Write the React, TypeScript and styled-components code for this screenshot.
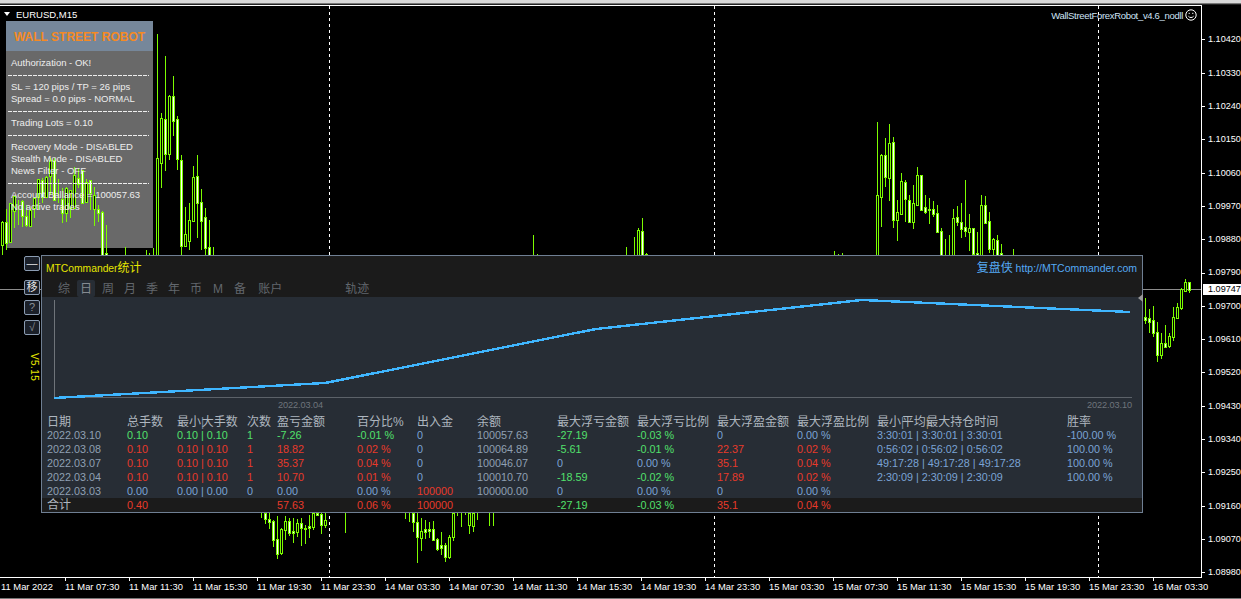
import styled, { createGlobalStyle } from 'styled-components';

type Tone = 'plain' | 'green' | 'red' | 'blue';
type Candle = [number, number, number, number?, number?, number?];
type TableCell = [string, Tone?];

const FONT = '"Liberation Sans", "Noto Sans CJK SC", sans-serif';
const COLUMNS = '80px 50px 70px 30px 80px 60px 60px 80px 80px 80px 80px 80px 190px 1fr';
const CANDLE_GREEN = '#7cfc00';

const toneColors: Record<Tone, string> = {
    plain: '#90a0b3',
    green: '#52e06c',
    red: '#e83a2a',
    blue: '#7ba4d6',
};

// x, wick top, wick bottom, body top, body bottom, 1 = white body
const candles: Candle[] = [
    [2, 221, 255, 222, 245], [6, 209, 250, 222, 243, 1], [10, 203, 243, 203, 242], [14, 196, 228, 196, 211],
    [18, 200, 225], [22, 200, 227, 201, 216, 1], [26, 205, 227, 216, 225, 1], [30, 208, 227, 210, 226],
    [34, 197, 218, 198, 208], [38, 179, 210, 179, 197], [42, 178, 203, 180, 197, 1], [46, 176, 197, 177, 197],
    [50, 158, 195, 160, 176], [54, 158, 200, 160, 200, 1], [58, 179, 203], [62, 188, 223, 199, 213, 1],
    [66, 187, 222, 188, 213], [70, 190, 218, 190, 208], [74, 167, 208, 175, 208], [78, 168, 188, 178, 184, 1],
    [82, 170, 203, 170, 203, 1], [86, 179, 203, 182, 202], [90, 180, 210, 180, 193, 1], [94, 187, 226, 195, 209],
    [98, 205, 222, 209, 213, 1], [102, 211, 255, 212, 255, 1], [106, 225, 255, 253, 255, 1], [125, 247, 255],
    [146, 250, 255], [149, 253, 255], [153, 248, 255],
    [157, 34, 255, 158, 255], [161, 113, 188, 118, 163], [165, 56, 171, 119, 154, 1], [169, 95, 160, 96, 154],
    [173, 76, 136, 96, 121, 1], [177, 116, 170, 119, 159, 1], [181, 155, 255, 160, 246, 1], [185, 207, 246, 234, 246],
    [189, 203, 250, 220, 241], [193, 166, 221, 177, 221], [197, 155, 238, 176, 203, 1], [201, 189, 250, 202, 221, 1],
    [205, 208, 255, 217, 248, 1], [209, 220, 255, 247, 255, 1], [213, 247, 255],
    [261, 513, 518], [265, 513, 524, 513, 519, 1], [269, 513, 529, 519, 522, 1], [273, 520, 547, 521, 540, 1],
    [277, 516, 559, 539, 554, 1], [281, 528, 555, 529, 553], [285, 516, 540, 521, 530], [289, 518, 536, 521, 533, 1],
    [293, 518, 543, 531, 533, 1], [297, 519, 537, 523, 532], [301, 518, 546, 523, 528, 1], [305, 525, 544, 528, 529, 1],
    [309, 515, 538, 526, 528, 1], [313, 513, 530, 513, 527], [317, 513, 515, 513, 515, 1], [321, 513, 534, 514, 525, 1],
    [325, 513, 528, 520, 525], [345, 513, 533],
    [405, 513, 519], [409, 513, 522], [413, 513, 532, 513, 522, 1], [417, 513, 563, 522, 537, 1],
    [421, 518, 551, 531, 538], [425, 520, 539, 529, 532, 1], [429, 522, 538, 529, 531, 1], [433, 521, 541, 529, 540, 1],
    [437, 538, 551, 539, 549, 1], [441, 532, 555, 545, 548, 1], [445, 543, 562, 545, 557, 1], [449, 535, 559, 537, 557],
    [453, 513, 541, 513, 537], [457, 513, 516], [461, 513, 527], [465, 513, 515], [469, 513, 534, 513, 525],
    [473, 513, 532, 513, 526], [477, 513, 520], [489, 513, 526], [493, 513, 526],
    [533, 235, 255], [537, 254, 255], [626, 247, 255], [634, 237, 255], [638, 228, 255, 230, 255],
    [642, 218, 255, 231, 255, 1], [646, 253, 255, 254, 255], [834, 251, 255], [838, 254, 255], [842, 253, 255],
    [877, 122, 255, 195, 255], [881, 154, 227, 155, 197], [885, 138, 187, 155, 177, 1], [889, 124, 201, 143, 178],
    [893, 137, 228, 142, 220, 1], [897, 200, 241, 212, 220], [901, 173, 214, 181, 214], [905, 180, 222, 182, 199, 1],
    [909, 195, 222, 200, 222, 1], [913, 185, 229, 203, 222], [917, 167, 205, 175, 205], [921, 175, 210, 175, 210, 1],
    [925, 195, 214, 207, 212, 1], [929, 198, 224, 209, 210, 1], [933, 201, 217, 209, 214, 1], [937, 205, 233, 213, 232, 1],
    [941, 228, 255, 231, 255, 1], [945, 239, 255], [949, 235, 255], [953, 209, 255, 218, 255], [957, 206, 226, 217, 222, 1],
    [961, 203, 238, 222, 229, 1], [965, 180, 237, 227, 231, 1], [969, 214, 251, 228, 232], [973, 228, 254, 228, 254, 1],
    [977, 232, 255, 253, 255, 1], [981, 195, 255, 205, 255], [985, 196, 224, 205, 223, 1], [989, 212, 253, 221, 249, 1],
    [993, 238, 255, 239, 249], [997, 235, 255, 240, 255, 1], [1001, 244, 255, 253, 255, 1], [1013, 249, 255],
    [1145, 298, 324, 317, 320, 1], [1149, 309, 333, 318, 322, 1], [1153, 306, 337, 320, 333, 1],
    [1157, 322, 362, 332, 355, 1], [1161, 333, 359, 343, 355], [1165, 325, 347, 343, 347, 1], [1169, 333, 348, 336, 346],
    [1173, 307, 341, 317, 337], [1177, 303, 319, 307, 318], [1181, 288, 310, 289, 308], [1185, 279, 292, 282, 291],
    [1189, 282, 293, 282, 290, 1],
];

const prices = [
    '1.10420', '1.10330', '1.10240', '1.10150', '1.10060', '1.09970', '1.09880', '1.09790', '1.09700',
    '1.09610', '1.09520', '1.09430', '1.09340', '1.09250', '1.09160', '1.09070', '1.08980',
];

const times = [
    '11 Mar 07:30', '11 Mar 11:30', '11 Mar 15:30', '11 Mar 19:30', '11 Mar 23:30', '14 Mar 03:30',
    '14 Mar 07:30', '14 Mar 11:30', '14 Mar 15:30', '14 Mar 19:30', '14 Mar 23:30', '15 Mar 03:30',
    '15 Mar 07:30', '15 Mar 11:30', '15 Mar 15:30', '15 Mar 19:30', '15 Mar 23:30', '16 Mar 03:30',
];

const tabs = ['综', '日', '周', '月', '季', '年', '币', 'M', '备', '账户', '轨迹'];

const headers = [
    '日期', '总手数', '最小|大手数', '次数', '盈亏金额', '百分比%', '出入金', '余额',
    '最大浮亏金额', '最大浮亏比例', '最大浮盈金额', '最大浮盈比例', '最小|平均|最大持仓时间', '胜率',
];

const rows: TableCell[][] = [
    [['2022.03.10'], ['0.10', 'green'], ['0.10 | 0.10', 'green'], ['1', 'green'], ['-7.26', 'green'], ['-0.01 %', 'green'], ['0', 'blue'], ['100057.63'], ['-27.19', 'green'], ['-0.03 %', 'green'], ['0', 'blue'], ['0.00 %', 'blue'], ['3:30:01 | 3:30:01 | 3:30:01', 'blue'], ['-100.00 %', 'blue']],
    [['2022.03.08'], ['0.10', 'red'], ['0.10 | 0.10', 'red'], ['1', 'red'], ['18.82', 'red'], ['0.02 %', 'red'], ['0', 'blue'], ['100064.89'], ['-5.61', 'green'], ['-0.01 %', 'green'], ['22.37', 'red'], ['0.02 %', 'red'], ['0:56:02 | 0:56:02 | 0:56:02', 'blue'], ['100.00 %', 'blue']],
    [['2022.03.07'], ['0.10', 'red'], ['0.10 | 0.10', 'red'], ['1', 'red'], ['35.37', 'red'], ['0.04 %', 'red'], ['0', 'blue'], ['100046.07'], ['0', 'blue'], ['0.00 %', 'blue'], ['35.1', 'red'], ['0.04 %', 'red'], ['49:17:28 | 49:17:28 | 49:17:28', 'blue'], ['100.00 %', 'blue']],
    [['2022.03.04'], ['0.10', 'red'], ['0.10 | 0.10', 'red'], ['1', 'red'], ['10.70', 'red'], ['0.01 %', 'red'], ['0', 'blue'], ['100010.70'], ['-18.59', 'green'], ['-0.02 %', 'green'], ['17.89', 'red'], ['0.02 %', 'red'], ['2:30:09 | 2:30:09 | 2:30:09', 'blue'], ['100.00 %', 'blue']],
    [['2022.03.03'], ['0.00', 'blue'], ['0.00 | 0.00', 'blue'], ['0', 'blue'], ['0.00', 'blue'], ['0.00 %', 'blue'], ['100000', 'red'], ['100000.00'], ['0', 'blue'], ['0.00 %', 'blue'], ['0', 'blue'], ['0.00 %', 'blue'], [''], ['']],
];

const totals: TableCell[] = [
    ['0.40', 'red'], [''], [''], ['57.63', 'red'], ['0.06 %', 'red'], ['100000', 'red'], [''],
    ['-27.19', 'green'], ['-0.03 %', 'green'], ['35.1', 'red'], ['0.04 %', 'red'], [''], [''],
];

const CandleChart = () => (
    <ChartSvg viewBox="0 5 1202 573">
        <line x1="0" y1="289.5" x2="1201" y2="289.5" stroke="#8c8c8c" />
        {[329, 714, 1098].map((x) => (
            <line key={x} x1={x + 0.5} y1="6" x2={x + 0.5} y2="577" stroke="#fff" strokeDasharray="3 3" />
        ))}
        {candles.map(([x, top, bottom, bodyTop, bodyBottom, white]) => (
            <g key={x}>
                <line x1={x + 0.5} y1={top} x2={x + 0.5} y2={bottom} stroke={CANDLE_GREEN} />
                {bodyTop !== undefined && bodyBottom !== undefined && (
                    <rect
                        x={x - 0.5}
                        y={bodyTop + 0.5}
                        width="2"
                        height={Math.max(bodyBottom - bodyTop, 1)}
                        fill={white ? '#fff' : '#000'}
                        stroke={CANDLE_GREEN}
                    />
                )}
            </g>
        ))}
    </ChartSvg>
);

const EquityPlot = () => (
    <PlotSvg viewBox="42 297 1100 115">
        <line x1="54.5" y1="300" x2="54.5" y2="398" stroke="#6f747a" />
        <line x1="54" y1="397.5" x2="1132" y2="397.5" stroke="#5c6269" />
        <polyline points="54,398 325,383 596,329 862,300 1130,312" fill="none" stroke="#3fb6ff" strokeWidth="2.4" />
        <PlotLabel x="278" y="408">2022.03.04</PlotLabel>
        <PlotLabel x="1087" y="408">2022.03.10</PlotLabel>
    </PlotSvg>
);

const Smiley = () => (
    <svg width="12" height="12" viewBox="0 0 12 12" fill="none" stroke="#fff">
        <circle cx="6" cy="6" r="5.2" />
        <path d="M3.4 7.2c1.2 1.8 4 1.8 5.2 0" />
        <path d="M4.2 3.8v1.2M7.8 3.8v1.2" />
    </svg>
);

const HeaderLabel = ({ text }: { text: string }) => (
    <HeaderCell>
        {text.split('|').map((part, i) => (
            <span key={part}>
                {i > 0 && <HeaderBar $second={i > 1}>|</HeaderBar>}
                {part}
            </span>
        ))}
    </HeaderCell>
);

export default function App() {
    return (
        <Page>
            <GlobalStyle />
            <TopStrip />
            <Middle>
                <ChartPane>
                    <RobotPanel>
                        <RobotTitle>WALL STREET ROBOT</RobotTitle>
                        <RobotBody>
                            <RobotLine>Authorization - OK!</RobotLine>
                            <RobotRule />
                            <RobotLine>SL = 120 pips / TP = 26 pips</RobotLine>
                            <RobotLine>Spread = 0.0 pips - NORMAL</RobotLine>
                            <RobotRule />
                            <RobotLine>Trading Lots = 0.10</RobotLine>
                            <RobotRule />
                            <RobotLine>Recovery Mode - DISABLED</RobotLine>
                            <RobotLine>Stealth Mode - DISABLED</RobotLine>
                            <RobotLine>News Filter - OFF</RobotLine>
                            <RobotRule />
                            <RobotLine>Account Ballance = 100057.63</RobotLine>
                            <RobotLine>No active trades</RobotLine>
                        </RobotBody>
                    </RobotPanel>
                    <CandleChart />
                    <SymbolTitle>
                        <SymbolArrow />
                        EURUSD,M15
                    </SymbolTitle>
                    <ExpertName>
                        WallStreetForexRobot_v4.6_nodll
                        <Smiley />
                    </ExpertName>
                    <SideTools>
                        <ToolButton $first>—</ToolButton>
                        <ToolButton>移</ToolButton>
                        <ToolButton $dim>?</ToolButton>
                        <ToolButton $dim>√</ToolButton>
                        <VersionLabel>V5.15</VersionLabel>
                    </SideTools>
                    <StatsWindow>
                        <TitleBar>
                            <WindowTitle>
                                MTCommander<WindowTitleCjk>统计</WindowTitleCjk>
                            </WindowTitle>
                            <SiteLink>
                                <SiteName>复盘侠</SiteName> http://MTCommander.com
                            </SiteLink>
                        </TitleBar>
                        <TabRow>
                            {tabs.map((tab) => (
                                <Tab key={tab} $active={tab === '日'} $shift={tab === '账户' ? 2 : tab === '轨迹' ? 53 : 0}>
                                    {tab}
                                </Tab>
                            ))}
                        </TabRow>
                        <EquityPlot />
                        <TableBody>
                            <HeaderRow>
                                {headers.map((h) => (
                                    <HeaderLabel key={h} text={h} />
                                ))}
                            </HeaderRow>
                            {rows.map((row) => (
                                <DataRow key={row[0][0]}>
                                    {row.map(([text, tone], i) => (
                                        <Cell key={i} $tone={tone ?? 'plain'}>
                                            {text}
                                        </Cell>
                                    ))}
                                </DataRow>
                            ))}
                            <TotalRow>
                                <TotalLabel>合计</TotalLabel>
                                {totals.map(([text, tone], i) => (
                                    <Cell key={i} $tone={tone ?? 'plain'}>
                                        {text}
                                    </Cell>
                                ))}
                            </TotalRow>
                        </TableBody>
                        <EdgeMarker />
                    </StatsWindow>
                </ChartPane>
                <PriceAxis>
                    {prices.map((price) => (
                        <PriceTick key={price}>{price}</PriceTick>
                    ))}
                    <CurrentPrice>1.09747</CurrentPrice>
                </PriceAxis>
            </Middle>
            <TimeAxis>
                <FirstTime>11 Mar 2022</FirstTime>
                {times.map((time) => (
                    <TimeTick key={time}>{time}</TimeTick>
                ))}
            </TimeAxis>
        </Page>
    );
}

const GlobalStyle = createGlobalStyle`
    html, body {
        margin: 0;
        background: #000;
    }
`;

const Page = styled.div`
    width: 1241px;
    height: 599px;
    overflow: hidden;
    display: flex;
    flex-direction: column;
    background: #000;
    color: #fff;
    font-family: ${FONT};
    border-bottom: 1px solid #777;
    box-sizing: border-box;
`;

const TopStrip = styled.div`
    height: 5px;
    flex: none;
    background: linear-gradient(#d8d8d8 0 3px, #777 3px 4px, #222 4px);
`;

const Middle = styled.div`
    display: flex;
    height: 573px;
    flex: none;
`;

const ChartPane = styled.div`
    position: relative;
    width: 1202px;
    height: 573px;
    flex: none;
    box-shadow: inset 0 1px #fff, inset -1px 0 #fff, inset 0 -1px #fff;
`;

// candles sit over the robot panel's fill but under its text
const ChartSvg = styled.svg`
    position: absolute;
    inset: 0;
    z-index: 1;
    width: 1202px;
    height: 573px;
    shape-rendering: crispEdges;
`;

const RobotPanel = styled.div`
    position: absolute;
    left: 6px;
    top: 16px;
    width: 147px;
    height: 227px;
    background: #696969;
`;

const RobotTitle = styled.div`
    height: 30px;
    background: #76879a;
    color: #f58a24;
    font-size: 12px;
    font-weight: 700;
    line-height: 32px;
    text-align: center;
`;

const RobotBody = styled.div`
    position: relative;
    z-index: 2;
    padding: 6px 4px 0 5px;
`;

const RobotLine = styled.div`
    height: 12px;
    font-size: 9.5px;
    line-height: 12px;
    color: #eee;
    white-space: nowrap;
`;

const RobotRule = styled.div`
    height: 1px;
    margin: 6px 0 5px -3px;
    background: repeating-linear-gradient(90deg, #eee 0 4px, transparent 4px 5px);
`;

const SymbolTitle = styled.div`
    position: absolute;
    z-index: 2;
    left: 4px;
    top: 3px;
    display: flex;
    align-items: center;
    gap: 6px;
    height: 12px;
    font-size: 9.5px;
    color: #fff;
`;

const SymbolArrow = styled.span`
    border-left: 3px solid transparent;
    border-right: 3px solid transparent;
    border-top: 4px solid #fff;
`;

const ExpertName = styled.div`
    position: absolute;
    z-index: 2;
    right: 5px;
    top: 4px;
    display: flex;
    align-items: center;
    gap: 2px;
    height: 12px;
    font-size: 9.5px;
    letter-spacing: -0.32px;
    color: #cfe4f7;
    white-space: nowrap;
`;

const SideTools = styled.div`
    position: absolute;
    z-index: 2;
    left: 24px;
    top: 251px;
    width: 16px;
    display: flex;
    flex-direction: column;
    align-items: center;
`;

const ToolButton = styled.div<{ $first?: boolean; $dim?: boolean }>`
    width: 16px;
    height: 15px;
    margin-bottom: ${(p) => (p.$first ? '9px' : '5px')};
    box-sizing: border-box;
    border: 1px solid #8b9cb2;
    border-radius: 2px;
    background: #1b2029;
    color: ${(p) => (p.$dim ? '#8a8f96' : '#e6e6e6')};
    font-size: 11px;
    line-height: 13px;
    text-align: center;
`;

const VersionLabel = styled.div`
    margin: 13px 0 0 5px;
    writing-mode: vertical-rl;
    color: #e6e600;
    font-size: 10px;
    letter-spacing: 0.4px;
`;

const StatsWindow = styled.div`
    position: absolute;
    z-index: 3;
    left: 41px;
    top: 250px;
    width: 1102px;
    height: 258px;
    box-sizing: border-box;
    border: 1px solid #6f7f93;
    display: flex;
    flex-direction: column;
    background: #272d35;
`;

const TitleBar = styled.div`
    height: 21px;
    flex: none;
    display: flex;
    align-items: center;
    justify-content: space-between;
    padding: 0 5px 0 4px;
    background: #1b1b1b;
`;

const WindowTitle = styled.div`
    color: #e6e600;
    font-size: 10.3px;
`;

const WindowTitleCjk = styled.span`
    font-size: 12px;
`;

const SiteLink = styled.div`
    color: #55aaf5;
    font-size: 10.5px;
`;

const SiteName = styled.span`
    font-size: 12px;
`;

const TabRow = styled.div`
    height: 20px;
    flex: none;
    display: flex;
    align-items: flex-end;
    gap: 10px;
    padding-left: 16px;
    background: #1b1b1b;
`;

const Tab = styled.div<{ $active?: boolean; $shift: number }>`
    min-width: 12px;
    height: 17px;
    margin-left: ${(p) => p.$shift + (p.$active ? -3 : 0)}px;
    margin-right: ${(p) => (p.$active ? -3 : 0)}px;
    padding: 0 ${(p) => (p.$active ? 3 : 0)}px;
    border-radius: 2px;
    background: ${(p) => (p.$active ? '#272d35' : 'transparent')};
    color: ${(p) => (p.$active ? '#858b92' : '#62676d')};
    font-size: 12px;
    line-height: 18px;
    text-align: center;
`;

const PlotSvg = styled.svg`
    display: block;
    width: 1100px;
    height: 115px;
    flex: none;
    shape-rendering: crispEdges;
`;

const PlotLabel = styled.text`
    fill: #6f757c;
    font-size: 9.2px;
    letter-spacing: -0.1px;
    font-family: ${FONT};
`;

const TableBody = styled.div`
    display: flex;
    flex-direction: column;
`;

const HeaderRow = styled.div`
    display: grid;
    grid-template-columns: ${COLUMNS};
    height: 16px;
    box-sizing: border-box;
    padding: 2px 0 0 5px;
    align-items: start;
`;

const HeaderCell = styled.div`
    color: #aeb6bf;
    font-size: 12px;
    line-height: 16px;
    white-space: nowrap;
`;

// the bar takes almost no room, the characters keep their 12px pitch
const HeaderBar = styled.span<{ $second?: boolean }>`
    letter-spacing: -2.5px;
    color: ${(p) => (p.$second ? '#b08a50' : '#7a8fa8')};
`;

const DataRow = styled.div`
    display: grid;
    grid-template-columns: ${COLUMNS};
    height: 14px;
    padding-left: 5px;
    align-items: center;
`;

const TotalRow = styled(DataRow)`
    background: #1b1b1b;
`;

const TotalLabel = styled.div`
    color: #aeb6bf;
    font-size: 12px;
    line-height: 14px;
`;

const Cell = styled.div<{ $tone: Tone }>`
    color: ${(p) => toneColors[p.$tone]};
    font-size: 10.8px;
    line-height: 14px;
    white-space: nowrap;
`;

const EdgeMarker = styled.span`
    position: absolute;
    right: -1px;
    top: 38px;
    border-top: 4px solid transparent;
    border-bottom: 4px solid transparent;
    border-right: 5px solid #9a9a9a;
`;

const PriceAxis = styled.div`
    position: relative;
    flex: 1;
    padding-top: 18.35px;
    box-sizing: border-box;
`;

const PriceTick = styled.div`
    height: 33.3px;
    padding-left: 6px;
    font-size: 9.1px;
    line-height: 33.3px;
    color: #fff;
    white-space: nowrap;
    background: linear-gradient(#fff, #fff) 0 50% / 3px 1px no-repeat;
`;

const CurrentPrice = styled.div`
    position: absolute;
    left: 1px;
    right: 0;
    top: 279px;
    height: 11px;
    padding-left: 5px;
    background: #fff;
    color: #000;
    font-size: 9.1px;
    line-height: 11px;
`;

const TimeAxis = styled.div`
    display: flex;
    flex: 1;
    padding-left: 1px;
`;

const FirstTime = styled.div`
    width: 64px;
    flex: none;
    padding-top: 3px;
    font-size: 9.4px;
    line-height: 12px;
    white-space: nowrap;
`;

const TimeTick = styled(FirstTime)`
    background: linear-gradient(#fff, #fff) 0 0 / 1px 3px no-repeat;
`;
